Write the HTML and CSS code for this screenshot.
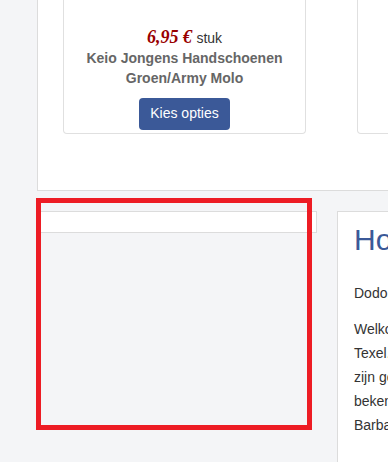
FILE: index.html
```html
<!DOCTYPE html>
<html lang="nl">
<head>
<meta charset="utf-8">
<title>Keio</title>
<link rel="stylesheet" href="styles.css">
</head>
<body>
<div class="page">
  <section class="products">
    <div class="card">
      <div class="price"><span class="amount">6,95 €</span> <span class="unit">stuk</span></div>
      <div class="name">Keio Jongens Handschoenen Groen/Army Molo</div>
      <a class="btn" href="#">Kies opties</a>
    </div>
    <div class="card">
      <div class="price"><span class="amount">6,95 €</span> <span class="unit">stuk</span></div>
      <div class="name">Keio Muts Molo</div>
      <a class="btn" href="#">Kies opties</a>
    </div>
  </section>
  <div class="lower">
    <aside class="sidebar">
      <div class="strip"></div>
    </aside>
    <main class="content">
      <h1 class="title">Hoofdpagina Dodo Texel</h1>
      <p>Dodo Texel, kinderkleding en speelgoed</p>
      <p>Welkom bij onze winkel in Den Burg op<br>Texel. Al meer dan twintig jaar<br>zijn gezellige kinderwinkel met<br>bekende merken zoals Molo en<br>Barbapapa en nog veel meer.</p>
    </main>
  </div>
</div>
<div class="highlight"></div>
</body>
</html>
```

FILE: styles.css
```css
html, body {
  margin: 0;
  padding: 0;
  overflow: hidden;
  background: #f4f5f7;
  font-family: "Liberation Sans", Arial, sans-serif;
}

.page {
  width: 1000px;
  margin-left: 37px;
}

.products {
  display: flex;
  gap: 51px;
  background: #fff;
  border: 1px solid #dcdcdc;
  border-top: 0;
  padding: 0 0 56px 25px;
}

.card {
  width: 241px;
  flex: none;
  border: 1px solid #e0e0e0;
  border-top: 0;
  border-radius: 0 0 4px 4px;
  padding: 26px 0 3px;
  display: flex;
  flex-direction: column;
  align-items: center;
  text-align: center;
}

.price {
  font-family: "Liberation Serif", "Times New Roman", serif;
  font-size: 18px;
  line-height: 22px;
  height: 22px;
}

.amount {
  font-weight: bold;
  font-style: italic;
  color: #990000;
}

.unit {
  font-family: "Liberation Sans", Arial, sans-serif;
  font-size: 14px;
  color: #333;
}

.name {
  font-size: 14px;
  line-height: 20px;
  min-height: 40px;
  font-weight: bold;
  color: #666;
  width: 220px;
}

.btn {
  margin-top: 10px;
  display: block;
  width: 91px;
  height: 32px;
  line-height: 31px;
  box-sizing: border-box;
  background: #3b5998;
  color: #fff;
  font-size: 14px;
  text-decoration: none;
  border-radius: 4px;
}

.lower {
  display: flex;
  gap: 20px;
  margin-top: 20px;
}

.sidebar {
  width: 280px;
  flex: none;
}

.strip {
  height: 20px;
  background: #fff;
  border: 1px solid #dcdcdc;
}

.content {
  flex: 1;
  background: #fff;
  border: 1px solid #dcdcdc;
  border-bottom: 0;
  padding: 11px 16px 200px;
  color: #333;
  font-size: 14px;
  line-height: 24px;
}

.title {
  margin: 0 0 24px;
  font-size: 30px;
  line-height: 34px;
  font-weight: normal;
  color: #3b5998;
  white-space: nowrap;
}

.content p {
  margin: 0 0 12px;
  white-space: nowrap;
}

.highlight {
  position: absolute;
  left: 36px;
  top: 198px;
  width: 266px;
  height: 222px;
  border: 5px solid #ed1c24;
}
```
